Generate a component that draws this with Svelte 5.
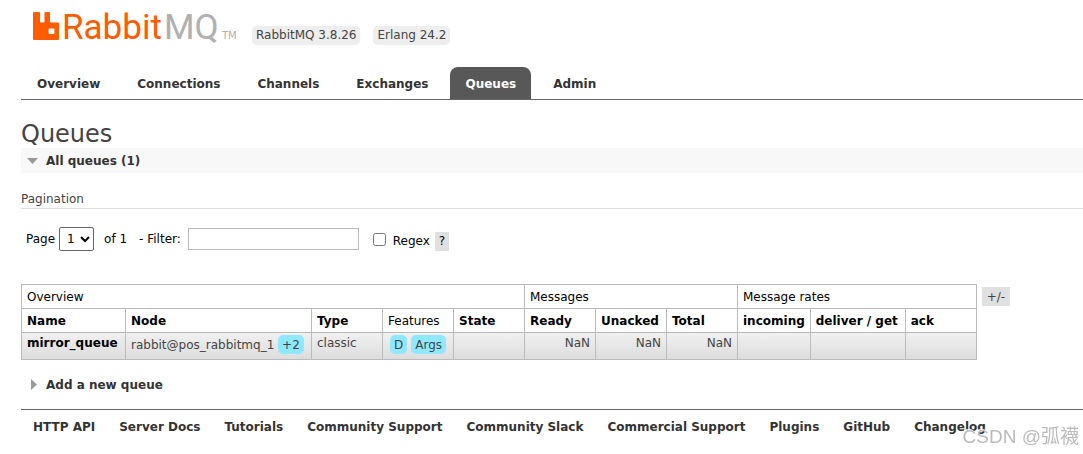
<script>
	const tabs = ['Overview', 'Connections', 'Channels', 'Exchanges', 'Queues', 'Admin'];
	const links = [
		'HTTP API',
		'Server Docs',
		'Tutorials',
		'Community Support',
		'Community Slack',
		'Commercial Support',
		'Plugins',
		'GitHub',
		'Changelog'
	];
	const queues = [
		{
			name: 'mirror_queue',
			node: 'rabbit@pos_rabbitmq_1',
			mirrors: '+2',
			type: 'classic',
			features: ['D', 'Args'],
			state: '',
			messages: [NaN, NaN, NaN],
			rates: ['', '', '']
		}
	];

	let current = $state('Queues');
	let page = $state('1');
	let filter = $state('');
	let regex = $state(false);
	let showAll = $state(true);
	let showAdd = $state(false);
</script>

<header>
	<div class="top">
		<a class="logo" href="#/" aria-label="RabbitMQ">
			<svg width="206" height="40" viewBox="0 0 206 40">
				<path
					class="orange"
					d="M1 1h5q1 0 1 1v8.500q0 1 1 1h2.500q1 0 1-1v-8.500q0-1 1-1h3.500q1 0 1 1v8.500q0 1 1 1h7q1 0 1 1v15.500q0 1-1 1h-24q-1 0-1-1v-26q0-1 1-1zM16.500 17.500q-1 0-1 1v3.500q0 1 1 1h4q1 0 1-1v-3.500q0-1-1-1z"
				/>
				<text class="name orange" x="29" y="28">Rabbit</text>
				<text class="name grey" x="131" y="28">MQ</text>
				<text class="tm grey" x="189" y="28">TM</text>
			</svg>
		</a>
		<span class="version">RabbitMQ 3.8.26</span>
		<span class="version">Erlang 24.2</span>
	</div>
	<nav class="tabs">
		{#each tabs as tab}
			<a href="#/{tab.toLowerCase()}" class:selected={tab === current} onclick={() => (current = tab)}>{tab}</a>
		{/each}
	</nav>
</header>

<main>
	<h1>Queues</h1>
	<button class="section shaded" aria-expanded={showAll} onclick={() => (showAll = !showAll)}>
		<svg width="13" height="12" viewBox="0 0 13 12">
			<path d={showAll ? 'M2 3h11l-5.500 6z' : 'M6 0l6 5.500l-6 5.500z'} />
		</svg>
		All queues (1)
	</button>

	{#if showAll}
		<h3>Pagination</h3>
		<div class="pagination">
			<label for="page">Page</label>
			<select id="page" bind:value={page}>
				<option>1</option>
			</select>
			<span class="of">of 1</span>
			<label for="filter">- Filter:</label>
			<input id="filter" type="text" bind:value={filter} />
			<input id="regex" type="checkbox" bind:checked={regex} />
			<div class="regex">
				<label for="regex">Regex</label>
				<button class="help">?</button>
			</div>
		</div>

		<div class="updatable">
			<table>
				<thead>
					<tr>
						<th colspan="5">Overview</th>
						<th colspan="3">Messages</th>
						<th colspan="3">Message rates</th>
					</tr>
					<tr class="columns">
						<th class="col-name">Name</th>
						<th class="col-node">Node</th>
						<th>Type</th>
						<th class="plain">Features</th>
						<th>State</th>
						<th>Ready</th>
						<th>Unacked</th>
						<th>Total</th>
						<th>incoming</th>
						<th class="col-get">deliver / get</th>
						<th>ack</th>
					</tr>
				</thead>
				<tbody>
					{#each queues as q}
						<tr>
							<td><a href="#/queues/{q.name}">{q.name}</a></td>
							<td>{q.node} <span class="tag">{q.mirrors}</span></td>
							<td>{q.type}</td>
							<td class="features">
								{#each q.features as f}<span class="tag">{f}</span>{/each}
							</td>
							<td>{q.state}</td>
							{#each q.messages as m}
								<td class="r">{m}</td>
							{/each}
							{#each q.rates as r}
								<td class="r">{r}</td>
							{/each}
						</tr>
					{/each}
				</tbody>
			</table>
			<button class="help">+/-</button>
		</div>
	{/if}

	<button class="section" aria-expanded={showAdd} onclick={() => (showAdd = !showAdd)}>
		<svg width="13" height="12" viewBox="0 0 13 12">
			<path d={showAdd ? 'M2 3h11l-5.500 6z' : 'M6 0l6 5.500l-6 5.500z'} />
		</svg>
		Add a new queue
	</button>
</main>

<footer>
	{#each links as link}
		<a href="#/">{link}</a>
	{/each}
</footer>

<div class="watermark">CSDN @弧襪</div>

<style>
	:global(body) {
		background: #fff;
		color: #444;
		font: 12px/16px Verdana, 'DejaVu Sans', sans-serif;
	}

	header,
	main,
	footer {
		margin-left: 21px;
	}

	a {
		color: #333;
		font-weight: bold;
		text-decoration: none;
	}

	button {
		border: 0;
		color: inherit;
		font: inherit;
		cursor: pointer;
	}

	.top {
		display: flex;
		align-items: flex-end;
		gap: 13px;
		height: 45px;
		padding-left: 12px;
	}

	.logo {
		align-self: flex-start;
		height: 40px;
		padding-top: 11px;
	}

	.orange {
		fill: #ff5c00;
	}

	.grey {
		fill: #b0b0b0;
	}

	.name {
		font: 35px Roboto, 'Liberation Sans', sans-serif;
	}

	.tm {
		font: 10px 'DejaVu Sans', sans-serif;
	}

	.version {
		padding: 1px 4px 2px;
		border-radius: 5px;
		background: #eee;
		white-space: nowrap;
	}

	.tabs {
		display: flex;
		margin-top: 22px;
		padding-left: 1px;
		border-bottom: 1px solid #666;
	}

	.tabs a {
		padding: 9px 15px 7px;
		margin-right: 7px;
		border-radius: 8px 8px 0 0;
	}

	.tabs a.selected {
		background: #585858;
		color: #fff;
	}

	h1 {
		margin: 21px 0 0;
		font-size: 24px;
		font-weight: normal;
		line-height: 27px;
	}

	.section {
		display: flex;
		align-items: center;
		gap: 8px;
		width: 100%;
		height: 25px;
		padding: 0 4px;
		background: none;
		color: #333;
		font-weight: bold;
	}

	.section path {
		fill: #999;
	}

	.shaded {
		background: #f8f8f8;
	}

	h3 {
		margin: 18px 0;
		border-bottom: 1px solid #ddd;
		font-size: 12px;
		font-weight: normal;
		line-height: 17px;
	}

	.pagination {
		display: flex;
		align-items: center;
		height: 24px;
		padding-left: 5px;
		color: #000;
	}

	select {
		width: 35px;
		height: 24px;
		margin: 0 10px 0 4px;
		padding-left: 3px;
		border: 1px solid #666;
		border-radius: 2px;
		background: #fff;
		font: inherit;
	}

	.of {
		margin-right: 12px;
	}

	input[type='text'] {
		box-sizing: border-box;
		width: 171px;
		height: 22px;
		margin: 0 14px 0 7px;
		border: 1px solid #bbb;
		font: inherit;
	}

	input[type='checkbox'] {
		width: 13px;
		height: 13px;
		margin: 0 7px 0 0;
	}

	.regex {
		display: flex;
		align-items: center;
		padding-top: 4px;
	}

	.help {
		height: 19px;
		margin-left: 5px;
		padding: 0 4px;
		background: #e0e0e0;
	}

	.updatable {
		display: flex;
		align-items: flex-start;
		margin: 33px 0 12px;
	}

	.updatable .help {
		margin-top: 3px;
		padding: 0 5px;
	}

	table {
		border-collapse: collapse;
	}

	th,
	td {
		min-width: 60px;
		padding: 0 5px;
		border: 1px solid #bbb;
		text-align: left;
		white-space: nowrap;
	}

	th {
		height: 23px;
		color: #000;
		font-weight: normal;
	}

	.columns th {
		font-weight: bold;
	}

	.columns .plain {
		font-weight: normal;
	}

	.columns .col-name {
		min-width: 93px;
	}

	.columns .col-node {
		min-width: 175px;
	}

	.columns .col-get {
		min-width: 84px;
	}

	tbody tr {
		background: linear-gradient(#f0f0f0, #dcdcdc);
	}

	td {
		height: 22px;
		padding: 2px 5px;
		vertical-align: top;
	}

	td a {
		color: #000;
	}

	.r {
		text-align: right;
	}

	.tag {
		display: inline-block;
		padding: 2px 4px 1px;
		border-radius: 5px;
		background: #8ee8ff;
	}

	.features .tag {
		margin-left: 2px;
	}

	.features .tag + .tag {
		margin-left: 4px;
	}

	footer {
		display: flex;
		flex-wrap: wrap;
		gap: 24px;
		margin-top: 12px;
		padding: 9px 12px;
		border-top: 1px solid #666;
	}

	.watermark {
		position: fixed;
		right: 4px;
		bottom: 4px;
		color: #bbb;
		font: 19px/26px 'Liberation Sans', 'Noto Sans CJK SC', sans-serif;
		text-shadow: -1px -1px 0 #fff;
	}
</style>
